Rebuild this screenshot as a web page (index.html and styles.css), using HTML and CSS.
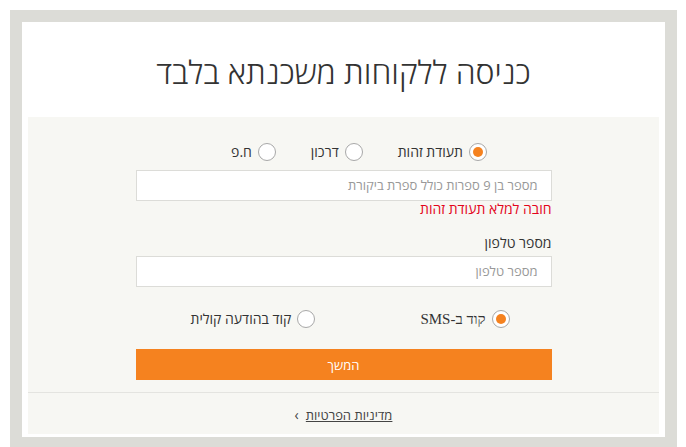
FILE: index.html
```html
<!DOCTYPE html>
<html lang="he" dir="rtl">
<head>
<meta charset="utf-8">
<link rel="stylesheet" href="styles.css">
</head>
<body>
<div class="frame">
  <div class="panel">
    <header class="head">
      <h1 class="title">כניסה ללקוחות משכנתא בלבד</h1>
    </header>
    <main class="body">
      <div class="form">
        <div class="radios radios-id">
          <label class="radio"><span class="dot checked"></span><span>תעודת זהות</span></label>
          <label class="radio"><span class="dot"></span><span>דרכון</span></label>
          <label class="radio"><span class="dot"></span><span>ח.פ</span></label>
        </div>
        <div class="input">מספר בן 9 ספרות כולל ספרת ביקורת</div>
        <div class="error">חובה למלא תעודת זהות</div>
        <div class="label">מספר טלפון</div>
        <div class="input">מספר טלפון</div>
        <div class="radios radios-code">
          <label class="radio"><span class="dot checked"></span><span class="sms">קוד ב-SMS</span></label>
          <label class="radio"><span class="dot"></span><span>קוד בהודעה קולית</span></label>
        </div>
        <button class="btn">המשך</button>
      </div>
      <div class="foot">
        <a class="link" href="#"><span class="u">מדיניות הפרטיות</span><span class="chev">›</span></a>
      </div>
    </main>
  </div>
</div>
</body>
</html>
```
FILE: styles.css
```css
* { box-sizing: border-box; }
html, body { margin: 0; padding: 0; background: #fff; }
body {
  font-family: "Open Sans", "Liberation Sans", "DejaVu Sans", sans-serif;
  color: #333;
  padding: 10px 9px 0 10px;
}
.frame {
  background: #dcdcd7;
  padding: 12px 12px 10px 12px;
  height: 437px;
}
.panel {
  background: #fff;
  height: 415px;
  display: flex;
  flex-direction: column;
}
.head {
  height: 95px;
  display: flex;
  align-items: center;
  justify-content: center;
}
.title {
  margin: 0;
  font-weight: 300;
  font-size: 32px;
  color: #333;
  padding-top: 4px;
}
.body {
  flex: 1;
  margin: 0 6px 3px 6px;
  background: #f7f7f3;
  display: flex;
  flex-direction: column;
}
.form {
  width: 416px;
  margin: 0 auto;
  padding-top: 25px;
}
.radios {
  display: flex;
  justify-content: center;
  font-size: 14px;
}
.radios-id { gap: 35px; padding-left: 31px; height: 20px; margin-bottom: 8px; }
.radios-code { gap: 105px; padding-left: 13px; height: 20px; margin-top: 22px; }
.radio {
  display: flex;
  align-items: center;
  gap: 6px;
  line-height: 20px;
}
.dot {
  width: 18px;
  height: 18px;
  border: 1px solid #a8a8a8;
  border-radius: 50%;
  background: #fff;
  display: flex;
  align-items: center;
  justify-content: center;
}
.dot.checked::after {
  content: "";
  width: 10px;
  height: 10px;
  border-radius: 50%;
  background: #f5821f;
}
.sms { font-family: "Liberation Serif", serif; font-size: 15px; }
.input {
  height: 31px;
  background: #fff;
  border: 1px solid #dcdcd8;
  font-size: 13px;
  color: #999;
  line-height: 29px;
  padding-right: 13px;
}
.error {
  color: #e3051b;
  font-size: 14px;
  line-height: 20px;
  margin-top: -2px;
}
.label {
  font-size: 14px;
  line-height: 20px;
  margin-top: 14px;
  margin-bottom: 3px;
}
.btn {
  display: block;
  width: 100%;
  height: 31px;
  margin-top: 20px;
  border: 0;
  background: #f5821f;
  color: #fff;
  font-family: inherit;
  font-size: 13px;
}
.foot {
  margin-top: 12px;
  border-top: 1px solid #e4e4e0;
  flex: 1;
  display: flex;
  justify-content: center;
  padding-top: 12px;
}
.link {
  color: #444;
  font-size: 13px;
  text-decoration: none;
  line-height: 20px;
}
.u { text-decoration: underline; }
.chev { font-size: 14px; margin-right: 7px; }
```
